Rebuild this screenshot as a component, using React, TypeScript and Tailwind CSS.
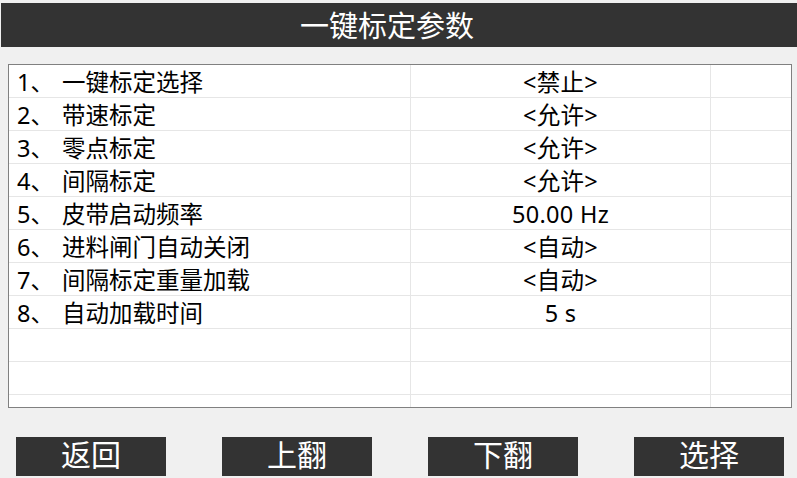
import React from "react";

const FONT = { fontFamily: '"Noto Sans", "Noto Sans CJK SC", sans-serif' };

const rows: { label: string; value: string }[] = [
  { label: "一键标定选择", value: "<禁止>" },
  { label: "带速标定", value: "<允许>" },
  { label: "零点标定", value: "<允许>" },
  { label: "间隔标定", value: "<允许>" },
  { label: "皮带启动频率", value: "50.00 Hz" },
  { label: "进料闸门自动关闭", value: "<自动>" },
  { label: "间隔标定重量加载", value: "<自动>" },
  { label: "自动加载时间", value: "5 s" },
];

const buttons = ["返回", "上翻", "下翻", "选择"];

export default function App() {
  const all = [...rows, ...Array.from({ length: 3 }, () => ({ label: "", value: "" }))];

  return (
    <div className="w-[797px] h-[478px] bg-[#f0f0f0] overflow-hidden flex flex-col" style={FONT}>
      <div className="mt-[3px] ml-[1px] h-[44px] bg-[#333333] flex items-center justify-center pr-[24px]">
        <span className="text-white text-[29px] leading-none">一键标定参数</span>
      </div>

      <div className="mt-[17px] ml-[8px] w-[784px] h-[344px] border border-[#808080] bg-white overflow-hidden">
        {all.map((r, i) => (
          <div key={i} className="grid grid-cols-[402px_300px_1fr] h-[33px] border-b border-[#e6e6e6] text-[23.5px] text-black">
            <div className="border-r border-[#e6e6e6] flex items-center pl-[8px] pt-[3px] leading-none">
              {r.label && (
                <>
                  <span className="w-[45px]">{i + 1}、</span>
                  <span>{r.label}</span>
                </>
              )}
            </div>
            <div className="border-r border-[#e6e6e6] flex items-center justify-center pt-[3px] leading-none tracking-[0.3px]">{r.value}</div>
            <div />
          </div>
        ))}
      </div>

      <div className="mt-[29px] ml-[16px] flex gap-[56px]">
        {buttons.map((b) => (
          <div key={b} className="w-[150px] h-[39px] bg-[#333333] text-white text-[30px] leading-none flex items-center justify-center pb-[4px]">
            {b}
          </div>
        ))}
      </div>
    </div>
  );
}
